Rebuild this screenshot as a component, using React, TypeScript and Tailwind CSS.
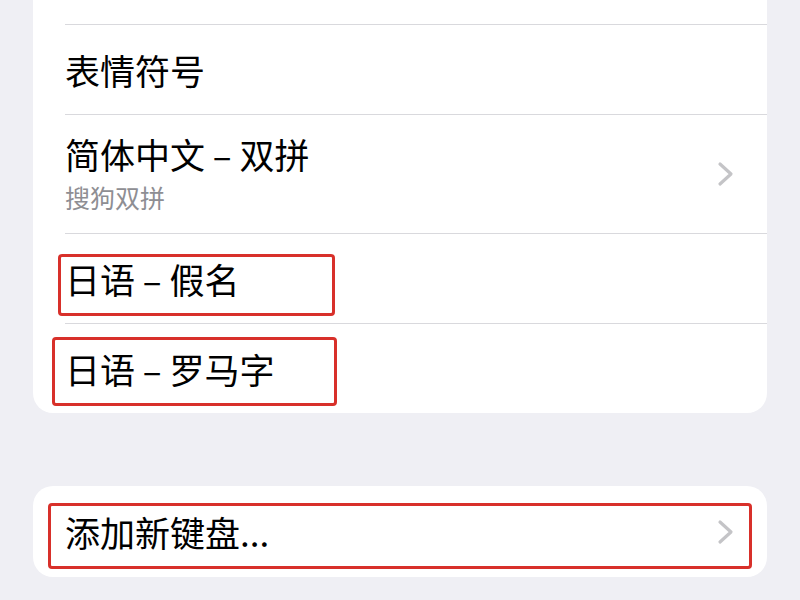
function Chevron() {
  return (
    <svg width="17" height="26" viewBox="0 0 17 26" fill="none" className="shrink-0">
      <path d="M3 3 L14 13 L3 23" stroke="#c4c4c7" strokeWidth="3.2" strokeLinecap="round" strokeLinejoin="round" />
    </svg>
  )
}

function Row({ title, subtitle, chevron, tall }: { title: string; subtitle?: string; chevron?: boolean; tall?: boolean }) {
  return (
    <div className="pl-[32px]">
      <div className={`${tall ? 'h-[119px]' : 'h-[90px]'} flex items-center justify-between border-t border-[#d9d9dd] pr-[33px]`}>
        <div className={`flex flex-col ${subtitle ? 'mb-[4px]' : ''}`}>
          <span className="text-[35px] leading-[40px] text-black">{title}</span>
          {subtitle && <span className="text-[25px] leading-[28px] text-[#8e8e93] mt-[9px]">{subtitle}</span>}
        </div>
        {chevron && <Chevron />}
      </div>
    </div>
  )
}

export default function App() {
  return (
    <div
      className="relative w-[800px] h-[600px] overflow-hidden bg-[#efeff4]"
      style={{ fontFamily: '"Noto Sans CJK SC", "Noto Sans", sans-serif' }}
    >
      <div className="mx-[33px] bg-white rounded-b-[20px]">
        <div className="h-[24px]" />
        <Row title="表情符号" />
        <Row title="简体中文 – 双拼" subtitle="搜狗双拼" chevron tall />
        <Row title="日语 – 假名" />
        <Row title="日语 – 罗马字" />
      </div>

      <div className="mx-[33px] mt-[73px] bg-white rounded-[20px] h-[91px] pl-[32px] pr-[33px] flex items-center justify-between">
        <span className="text-[35px] leading-[40px] text-black">添加新键盘...</span>
        <Chevron />
      </div>

      {/* red annotation boxes */}
      <div className="absolute left-[58px] top-[254px] w-[277px] h-[62px] border-[3px] border-[#d8302a] rounded-[4px]" />
      <div className="absolute left-[52px] top-[337px] w-[285px] h-[69px] border-[3px] border-[#d8302a] rounded-[4px]" />
      <div className="absolute left-[48px] top-[503px] w-[704px] h-[66px] border-[3px] border-[#d8302a] rounded-[4px]" />
    </div>
  )
}
